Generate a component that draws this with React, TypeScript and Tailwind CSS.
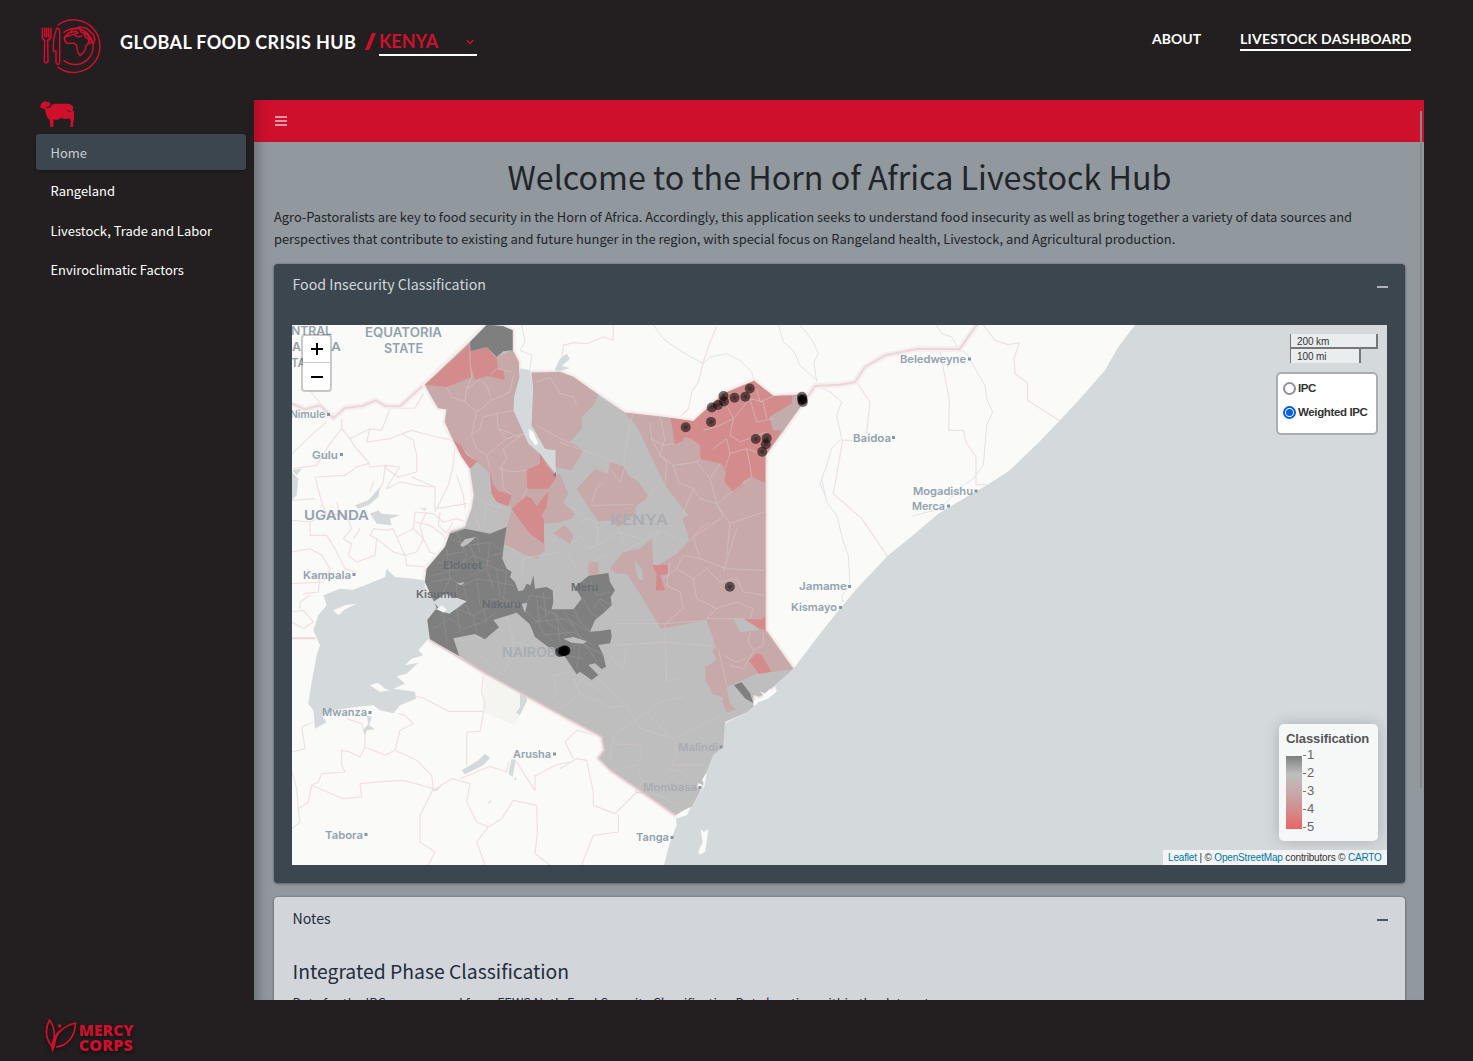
import React from "react";

const SANS = "font-['Noto_Sans_CJK_SC','Noto_Sans',sans-serif]";
const GEO = "font-['Lato','Open_Sans',sans-serif]";
const ARIAL = "font-['Liberation_Sans',Arial,sans-serif]";

function HubLogo() {
  return (
    <svg width="62" height="58" viewBox="0 0 186 174" fill="none" stroke="#cf102d" strokeWidth="4.500" strokeLinecap="round" strokeLinejoin="round">
      <path d="M54 24A79 79 0 1 1 54 151" />
      <path d="M72 46A54 54 0 1 1 72 131" />
      <path d="M7 34v26q0 8 7 10l-1 64q5 8 11 0l-1-64q9-2 10-12V34M14 34v26M20 34v26M26 34v26" />
      <path d="M50 34q8-2 9 8v93q-1 9-6 7t-5-8v-32H40q-2-36 10-68z" />
      <path d="M74 66q2-10 12-9l-4-7 10-4 2-6 12-5 14-5 20 4 13 12 8 8 4 15-6 12-5-13-8-8-6-9-9-1 7 12 10 6-4 12-6 6-2 12-9 12-7 6-6-9-3-12-1-10-7-6H87q-10 0-13-10-3-8 5-15z" />
      <path d="M86 57l14-5 12 7 13-1M94 46l15-3 5 5-9 2M120 37l4 9 13 3M148 80l7-6" />
    </svg>
  );
}

function Sheep() {
  return (
    <svg width="34" height="28" viewBox="0 0 108 87" fill="#cf102d">
      <path d="M1 22Q2 9 10 5q8-5 14 1 8-3 9 5-1 10-10 10-7 0-8-6 2 11 13 9 8-2 9-10 5-2 12-3h36q8-1 14 4 9 4 6 12-2 4-1 6 5 4 7 4 1 8-2 20l-3 12-1 16h-9l2-18-4-10q-12 4-20 1-4-2-9-1-8 8-22 3l-1 25h-9l-2-22q-10-7-13-24L14 26Q6 28 1 22z" />
      <path d="M86 30q2 7 12 6" fill="none" stroke="#231f20" strokeWidth="2.500" />
    </svg>
  );
}

function MercyLogo() {
  return (
    <svg className="drop-shadow-[0_2px_2px_rgba(0,0,0,0.6)]" width="92" height="38" viewBox="0 0 92 38">
      <g fill="none" stroke="#cf102d" strokeWidth="1.700" strokeLinejoin="round">
        <path d="M7.500 30Q-3 18 4.500 3q6 8 4.500 19" />
        <path d="M11 30C22 29 30 20 30.500 6 20 8 14 14 9.500 22" />
      </g>
      <g fill="#cf102d">
        <path d="M6.500 27Q8 18 16 12q-4 6-5 12-1 7-3.500 11.500Q6 33 6.500 27z" />
        <circle cx="14.500" cy="9" r="1.800" />
      </g>
      <g fill="#cf102d" className="font-['Open_Sans',sans-serif] font-extrabold" fontSize="16">
        <text x="34" y="19" textLength="55" lengthAdjust="spacingAndGlyphs">MERCY</text>
        <text x="34" y="33.500" textLength="54" lengthAdjust="spacingAndGlyphs">CORPS</text>
      </g>
    </svg>
  );
}

const KENYA =
  "M590 9L540 60 405 188 425 225 445 258 470 262 465 300 490 355 540 440 552 520 545 560 525 615 480 630 465 675 410 740 405 780 430 835 465 815 530 838 470 875 440 858 412 894 420 954 508 1002 585 1054 840 1194 935 1244 942 1284 925 1309 960 1344 1155 1479 1205 1454 1235 1399 1250 1349 1270 1299 1300 1274 1305 1199 1370 1171 1390 1154 1390 1119 1410 1124 1450 1094 1510 1041 1427 924V400L1470 340 1545 235 1525 218 1450 222 1392 177 1300 215 1210 298 1120 285 1005 272 925 218 850 165 810 150 725 152 730 200 725 310 765 380 797 385V462L750 395 715 365 670 265 672 225 688 165 686 120 668 85V25L640 13 600 9z";

const PINK = [
  "M405 188L425 225 445 258 470 262 465 300 490 355 560 418 600 455 605 520 660 550 665 565 652 610 640 665 700 695 740 710 765 685 760 605 810 600 845 590 855 575 820 540 835 515 810 455 800 460 750 395 715 365 670 265 672 225 688 165 686 120 668 85 620 105 540 60z",
  "M725 152L810 150 850 165 925 218 910 250 875 285V320L840 360 880 385 845 445 797 435V385L765 380 725 310 730 200z",
  "M960 420L1005 435 1015 460 1045 480 1078 525 1040 550 1035 575 985 615 960 595 925 598 895 555 860 500 915 442 955 455z",
  "M790 632L825 610 850 640 840 665 815 650z",
  "M895 720L905 716 925 722V765L895 760z",
  "M1005 272L1120 285 1210 298 1300 215 1392 177 1450 222 1525 218 1545 235 1427 400V924L1510 1041 1440 1050 1400 1055 1310 1095 1320 1145 1338 1162 1310 1172 1297 1140 1300 1126 1265 1115 1260 1095 1247 1080 1245 1035 1272 1020 1280 1010 1267 990 1276 970 1250 895 1112 920 1052 819 1010 755 980 755 960 740 1000 690 1050 680 1085 650 1090 720 1085 742 1120 720 1160 695 1198 655 1178 590 1195 580 1125 490 1080 395 1045 320z",
];

const RED = [
  "M540 65L405 188 470 195 545 165z",
  "M542 90L590 75 620 110 625 142 640 145 645 173 590 162 555 173 542 130z",
  "M490 355L515 372 530 400 563 418 540 440 515 405z",
  "M750 395L770 430 800 465 775 500 712 500 710 445 750 425z",
  "M600 450L610 490 625 508 665 518 655 553 620 540 605 515z",
  "M665 560L710 522 725 530 740 553 760 525 775 510 770 555 755 580 762 595V665L720 635z",
  "M1210 298L1300 215 1392 177 1450 222 1507 222 1505 245 1438 285 1450 325 1475 325 1427 400 1425 482 1385 465 1358 478V490L1330 510 1303 480 1308 450 1295 425 1232 412 1230 370 1205 350 1185 345 1175 358 1155 367 1142 288z",
  "M1085 730L1132 728 1135 755 1110 760 1125 805 1098 805 1100 755z",
  "M1360 889L1427 886V924L1410 920z",
  "M1400 994L1415 1000 1445 1049 1407 1056 1377 1016z",
];

const DARK = [
  "M590 9L540 60 542 88 590 75 620 105 640 88 668 85V25L640 13 600 9z",
  "M525 620L600 635 650 615 642 665 637 710 650 740 665 750 660 765 675 780 685 808 700 805 710 785 722 790 730 760 735 800 770 795 788 805 790 840 785 862H850L875 830 855 795 895 762 955 753 960 780 975 805 962 825 965 850 940 874 915 894 900 929 930 927 962 922 965 944 960 964 925 969 940 999 948 1034 935 1041 915 1024 895 1029 925 1059 905 1074 870 1049 860 1057 825 1004 780 979 735 945 725 920 718 905 680 872 610 894 627 916 585 952 555 936 490 949 508 1002 420 954 412 894 440 858 430 835 405 780 410 740 465 675 480 635z",
  "M1332 1089L1355 1081 1380 1114 1390 1144 1365 1129z",
  "M788 460L798 450V464z",
];

const OCEAN =
  "M2535 9L2485 75 2445 145 2370 230 2310 295 2245 362 2195 410 2160 445 2090 490 2020 530 1945 575 1860 647 1795 700 1700 800 1640 872 1580 948 1510 1041 1455 1090 1460 1108 1435 1130 1400 1140 1390 1154 1370 1171 1305 1205 1300 1274 1270 1299 1250 1349 1245 1389 1205 1454 1190 1480 1158 1490 1160 1510 1140 1560 1122 1629H3291V9z";

const VICTORIA =
  "M100 820L150 800 190 803 225 790 285 765 290 740 315 765 370 770 403 775 405 800 430 835 520 830 525 845 470 876 440 860 412 894 420 945 385 985 400 1000 365 1010 345 1030 385 1022 350 1055 320 1063 345 1085 310 1100 375 1109 378 1130 330 1150 310 1174 270 1165 250 1150 200 1155 130 1165 95 1180 110 1200 75 1220 70 1165 55 1145 65 1080 80 1000 90 970 70 925 85 880 110 850z";

const TURKANA = "M700 140L720 145 732 200 725 310 765 380 797 385V462L750 395 715 365 670 265 672 225 688 165 690 140z";

const LAKES = [
  "M795 140L810 110 830 95 840 110 815 132 840 138 800 150z",
  "M6 450L25 470 20 520 6 535z",
  "M6 445L35 440 20 460z",
  "M240 575L265 565 275 575 330 580 300 590 305 610 260 605z",
  "M195 550L235 535 270 495 265 525 235 550 205 560z",
  "M385 555L400 560 410 558 405 566z",
  "M690 1115L705 1110 712 1135 690 1180 678 1172 690 1155z",
  "M515 1345L565 1315 585 1295 600 1308 580 1330 525 1357z",
  "M665 1310L678 1315 672 1340 668 1365 655 1355z",
  "M675 1365L680 1372 673 1376z",
  "M428 1408L455 1392 440 1406z",
  "M590 1445L605 1433 600 1442z",
  "M230 1180L245 1185 238 1210 255 1222 230 1225 225 1240 220 1225 235 1205z",
];

const ISLANDS = [
  "M1232 1522L1242 1530 1255 1520 1250 1560 1245 1590 1230 1598 1225 1590 1238 1560z",
  "M1390 1140L1405 1130 1430 1132 1405 1140 1395 1152z",
  "M1410 1108L1425 1115 1440 1100 1445 1110 1425 1125z",
  "M1158 1486L1172 1470 1200 1456 1190 1476z",
  "M1225 1383L1238 1390 1232 1405 1222 1395z",
  "M1250 1350L1243 1385 1236 1375z",
  "M130 865L165 850 200 845 165 862 145 880z",
  "M240 1090L265 1082 285 1100 300 1105 270 1110z",
  "M716 320L730 330 745 365 735 370 718 345z",
];

/* Thin administrative boundaries outside the classified area. */
const BORDERS = [
  "M180 350L240 320 275 325 300 260M300 260L375 258 400 215M180 350L195 375 235 420 240 435 285 430 330 435M240 320L230 360 300 350 335 335 365 325 440 345 480 352",
  "M155 290L155 320 120 365 80 430 10 440M155 320L180 350M6 395L80 325 110 300M335 335L370 355 380 400 380 450 325 465 290 440 285 430",
  "M365 465L435 495V570M480 352L495 370 490 430 475 490 440 560 530 545M500 460L520 520 525 560",
  "M80 465L165 460 200 435 235 425M75 465L95 540 110 575 170 580 185 620 160 650 185 665 175 700 200 720M6 535L75 530",
  "M110 575L60 600 6 595M60 600L60 640 110 640 135 680 165 740 200 750M6 690L60 680 95 700 120 740 100 780 6 785",
  "M200 720L255 700 260 650 240 640 250 620 290 625M290 625L310 620 320 645 370 620 375 570 430 575M320 645L345 700 350 730 410 735M260 650L310 690 345 700",
  "M430 575L460 600 500 590 530 600M375 600L420 610 460 640 470 670M370 620L400 650 420 690 440 700M345 700L380 690 400 650M285 430L280 480 270 500M330 435L300 480 290 500 330 480 380 490 435 495",
  "M60 750L90 770 85 810 40 815M6 870L40 865 70 900 40 920 6 900M30 860L30 840 60 820",
  "M210 620L190 650M250 480L240 510M140 540L150 580M490 600L470 630M450 570L445 610 475 640M410 570L390 610 400 650",
  "M375 1122L405 1130 475 1168H580M580 1055L575 1110 585 1145 570 1228 530 1230V1330",
  "M170 1190L215 1205 225 1235V1275L285 1300 315 1285 330 1225 370 1205 345 1180 325 1175M225 1275L210 1305 180 1290 155 1285V1330L165 1350 95 1355 85 1380 65 1390 100 1405 160 1430 215 1425 210 1385 285 1378 340 1375 430 1400 425 1360 380 1315 315 1285",
  "M430 1400L390 1480V1560L435 1590 415 1629M65 1390L55 1440 25 1460 30 1500 6 1520M6 1350L20 1400 25 1460M6 1290L45 1280 35 1215 70 1200M430 1405L485 1370 540 1385 530 1440 560 1500 595 1515 560 1560 585 1629",
  "M510 1370L600 1333 650 1350 655 1320M680 1320L705 1360 735 1405V1362L800 1328 840 1320M595 1515L635 1490 670 1435 740 1450 742 1535 735 1595 780 1629",
  "M810 1340L860 1310 890 1315 910 1410 910 1450 975 1475 1040 1410M850 1310L825 1260 860 1225 920 1240M985 1477V1530L910 1540 890 1590 875 1629",
  "M815 120L820 70 850 62 890 65 940 45 970 55V9M1280 15L1260 60 1240 120 1225 180 1205 210 1195 260 1170 285",
  "M1700 180L1740 240 1730 335M1690 355H1658L1630 515 1715 590 1793 704M1950 85L1978 235 1976 325H2020L2028 360 2058 405V488H2090M2080 9L2115 55 2155 68 2188 62 2172 110 2175 155 2213 183V235L2310 297",
];

const RIVERS = [
  "M1090 9L1120 50 1170 85 1195 100 1240 125 1260 105 1310 95 1350 115 1385 150 1392 175M1465 9L1480 60 1510 85 1530 130 1575 170M1530 9L1555 40 1570 60 1585 95 1572 120 1580 180",
  "M1580 190L1620 210 1655 240 1640 280 1655 350 1625 380 1610 430 1595 470 1610 540 1640 580 1655 640 1660 660 1675 700 1680 790 1655 820 1660 840M1600 460L1590 485 1605 520",
  "M1940 9L1955 35 1985 45 2005 80 2030 95 2055 140 2085 190 2090 230 2108 270 2090 310 2085 370 2080 430 2050 470 2020 490 1950 560 1865 583",
  "M695 9L705 60 690 85 725 100 720 145M760 200L752 240 765 290M60 205L95 250 110 290",
];

/* Sub-county outlines drawn faintly over the fills. */
const MESH = [
  "M540 60V120L545 165 530 200 525 240 560 270 605 235 590 190 570 172 530 200M470 195L485 225 525 240M605 235L660 210 670 160M560 270L545 340 560 380 590 400 600 440M670 265L620 275 625 320 650 350 700 335 640 380 650 410 630 440 665 450 710 445M620 275L580 285 570 320 545 340M625 320L690 345M590 400L650 350M635 440L640 500 665 518M712 500L695 530M600 160L620 140 665 150",
  "M740 180L780 165 810 215 850 225 860 250M740 310L810 350 845 365M810 360L970 418M925 218L1020 310 1000 430M1020 310L1030 270M1080 300L1085 350 1110 400 1130 420M1085 350L1120 370 1150 365M1110 285L1125 350 1110 400 1150 430 1220 420 1232 412M1130 420L1125 490M1150 430L1165 480 1210 500 1180 570 1195 580M1220 420L1260 470 1280 545 1385 465M1290 425L1260 470M1210 500L1230 530 1280 545 1320 605 1420 570M1280 545L1300 585 1210 645M1320 605L1310 700M1210 645L1230 710 1310 740 1420 745M1300 750L1340 620M1200 655L1230 620 1260 600",
  "M1240 325L1290 310 1330 290 1380 230M1330 290L1310 250 1260 260M1330 290L1320 340 1350 360 1430 330M1380 230L1400 300 1450 290M1270 380L1310 350 1320 395 1370 380 1425 400M1320 395L1305 440M1370 380L1380 430 1385 465M1400 200L1410 240 1450 222M1380 230L1420 240 1430 290",
  "M870 600L890 590 920 600 925 630 920 670 895 680 870 640 830 680M850 560L900 595M925 670L985 630 1050 650M985 615L1000 660M1000 690L1110 625 1160 650M1110 625L1090 660M950 700L880 730M905 540L920 500 940 480M900 550L1030 548M960 440L990 480 1005 435M835 700L870 750M1090 500L1070 530",
  "M1120 770L1160 740 1210 770 1250 740 1290 780 1340 770 1360 810 1425 820M1160 740L1180 700 1230 710M1210 770L1220 830 1280 860 1340 840M1130 900L1180 860 1170 810 1130 790M1280 860L1250 890 1420 890M1340 840L1390 860 1380 890M1140 720L1130 790",
  "M970 905H1125L1250 895M970 970L1130 960 1280 975M1125 905L1130 1080 1180 1065M1010 970L1000 1040 960 1000M1380 930L1375 960 1390 985 1420 970 1420 930M1320 1030L1360 1040 1390 990M1285 980L1310 1090M1300 1000L1340 1020 1370 1010M1180 1125L1110 1140 1040 1190 970 1240 960 1310M860 1090L900 1050 1010 1150 1050 1220 1150 1250 1290 1180M1070 1170L1145 1250M810 1160L870 1115 960 1155 1010 1150M850 1070L870 1115M830 1000L870 1070 940 1110M970 1265L1050 1270 1055 1300 1040 1330 1060 1380 1035 1410M1150 1250L1160 1290 1145 1330 1240 1330M960 1344L1040 1330M1130 1340L1180 1350 1200 1380M1035 1410L1110 1420 1160 1450",
  "M555 520L590 545 640 560M555 580L570 620M590 545L580 610M500 960L600 940M650 880L670 960 655 1020 640 1060M670 960L720 970M840 1050L790 1060 800 1110 780 1140M570 1000L640 1060M650 670L700 710 755 700 810 690M700 710L695 760M765 640L810 660",
];

/* Denser mesh for the urban sub-counties in the dark cluster. */
const DARKMESH = [
  "M480 650L540 670 600 660 640 690M500 630L530 700 510 740 430 760M540 670L560 720 620 740 650 750M600 660L590 740 610 800M440 720L500 735 550 700 600 720M420 780L480 770 520 790 560 770 620 780 670 790M470 680L480 770 460 810M520 790L530 830M560 770L570 850 610 830 680 850M620 740L630 830M450 880L500 860 550 880 610 850M430 920L480 890 520 920 580 900 620 870M460 880L470 960M500 860L510 930M550 880L560 930M650 750L640 830 700 860 720 820 780 830M700 860L740 900 780 870M560 640L570 690M520 690L460 700M590 740L540 760M500 780L500 820M640 690L610 700",
  "M740 820L750 920 790 960M760 810L770 900 830 940M790 870L820 920 870 960M820 865L850 910 890 980M850 860L870 900 900 925M880 830L900 870 930 890M900 770L920 820 960 810M910 860L930 830 965 850M730 900L830 890 900 930M760 940L850 930 910 970M840 980L870 960 940 1000M870 960L860 1040M890 970L920 1020M830 1000L880 1010M740 850L800 880 850 910M540 880L530 850 490 860M580 850L590 910M800 880L810 960M930 840L950 865",
];

type Label = [string, number, number, number, number];
const TOWNS: Label[] = [
  ["EQUATORIA", 365, 336.5, 77, 12.5],
  ["STATE", 384, 352.5, 39, 12.5],
  ["Nimule", 290, 418, 35, 11],
  ["Gulu", 312, 458.5, 26, 11],
  ["UGANDA", 304, 520, 65, 13],
  ["Kampala", 303, 578.5, 48, 11],
  ["Mwanza", 322, 716, 45, 11],
  ["Arusha", 513, 757.5, 38, 11],
  ["Tabora", 325, 838.5, 38, 11],
  ["Tanga", 636, 841, 33, 11],
  ["Beledweyne", 900, 362.5, 66, 11],
  ["Baidoa", 853, 441.5, 38, 11],
  ["Mogadishu", 913, 494.5, 60, 11],
  ["Merca", 912, 509.5, 33, 11],
  ["Jamame", 799, 590, 48, 11],
  ["Kismayo", 791, 611, 46, 11],
  ["NTRAL", 291, 335, 41, 12],
  ["A", 292, 350.5, 9, 12],
  ["A", 331, 350.5, 10, 12],
  ["TA", 291, 366.5, 15, 12],
];
const COVERED: Label[] = [
  ["KENYA", 610, 524.5, 58, 14],
  ["NAIROBI", 502, 657, 58, 13],
  ["Malindi", 678, 750.5, 40, 11],
  ["Mombasa", 643, 791, 54, 11],
];
const SHADED: Label[] = [
  ["Eldoret", 443, 568.5, 39, 11],
  ["Kisumu", 416, 598, 41, 11],
  ["Nakuru", 482, 607.5, 39, 11],
  ["Meru", 571, 590.5, 27, 11],
];
const MARKS = [
  [328.5, 414.5], [341.5, 454.5], [354, 574.5], [370, 712.5], [554.5, 754], [366, 834.5], [672, 837.5],
  [969.5, 359], [893.5, 437.5], [976, 491], [948.5, 506], [849.5, 586.5], [840.5, 607.5], [721, 747], [700, 787.5],
];
const POINTS = [
  [685.7, 427.3], [711, 421.9], [711.8, 407.5], [718, 405], [724, 401.5], [723.5, 396], [734.5, 397.7],
  [745.3, 396.7], [749.8, 388.5], [755.8, 439], [766.7, 438.3], [765.8, 444.3], [762.2, 451.7],
  [802, 396.8], [802.5, 399], [802.8, 402], [802.3, 400], [729.8, 586.7],
  [565, 651], [564, 651], [565.5, 650.5], [564, 650.5], [562.5, 651.5], [560, 652],
];

function TownText({ items, fill }: { items: Label[]; fill: string }) {
  return (
    <g fill={fill} className="font-['Inter',sans-serif] font-semibold">
      {items.map(([name, x, y, w, size], i) => (
        <text key={i} x={x} y={y} textLength={w} lengthAdjust="spacingAndGlyphs" fontSize={size}>
          {name}
        </text>
      ))}
    </g>
  );
}

const paths = (list: string[]) => list.map((d, i) => <path key={i} d={d} />);

function MapCanvas() {
  return (
    <svg className="block h-[540px] w-[1095px]" viewBox="292 325 1095 540">
      <rect x="292" y="325" width="1095" height="540" fill="#fafaf8" />
      <g transform="translate(290 322) scale(.333333)" strokeLinejoin="round">
        <path d="M585 1054L712 1125 675 1210 578 1170z" fill="#f4f5f0" />
        <g fill="none" stroke="#dee4e9" strokeWidth="3">{paths(RIVERS)}</g>
        <g fill="none" stroke="#f1dfe1" strokeWidth="3.500">{paths(BORDERS)}</g>
        <g fill="none" strokeLinecap="round">
          <path d="M6 245L45 262 90 250 130 288 165 258 215 252 258 235 285 252 330 253 405 185 590 9M1545 235L1575 192 1650 188 1695 180 1725 135 1785 100 1885 80 2008 82 2060 9" stroke="#f5f0ef" strokeWidth="18" />
          <path d="M6 245L45 262 90 250 130 288 165 258 215 252 258 235 285 252 330 253 405 185 590 9M1545 235L1575 192 1650 188 1695 180 1725 135 1785 100 1885 80 2008 82 2060 9M6 949H75" stroke="#edd5d8" strokeWidth="6" />
        </g>
        <path d={KENYA} fill="none" stroke="#f5efee" strokeWidth="17" />
        <path d={KENYA} fill="none" stroke="#eedcde" strokeWidth="5" />
        <path d={OCEAN} fill="#d4dadc" />
        <path d={VICTORIA} fill="#d4dadc" />
        <path d={TURKANA} fill="#d4dadc" />
        <g fill="#d4dadc">{paths(LAKES)}</g>
        <path d={KENYA} fill="#bebebe" />
        <g fill="#c7a9a9">{paths(PINK)}</g>
        <g fill="#d38b8b">{paths(RED)}</g>
        <path d="M1505 245L1520 225 1542 235 1475 325 1450 325 1438 285z" fill="#c2adad" />
        <path d="M1330 889L1360 891 1410 924 1350 931z" fill="#bebebe" />
        <path d="M1035 715L1055 740 1060 775 1045 770 1035 735z" fill="#bebebe" />
        <g fill="none" stroke="#d0c5c4" strokeOpacity=".65" strokeWidth="3">{paths(MESH)}</g>
        <g fill="#7f7f7f">{paths(DARK)}</g>
        <g fill="none" stroke="#aaa39f" strokeOpacity=".4" strokeWidth="2.500">{paths(DARKMESH)}</g>
        <path d="M510 670L525 652 558 645 535 665 518 675zM500 785L525 780 515 790zM695 845L712 843 705 872z" fill="#bebebe" />
        <path d="M820 950L850 945 890 958 880 965 845 962z" fill="#bebebe" />
        <path d="M430 840L465 815 530 838 478 875 455 868z" fill="#d4dadc" />
        <path d="M430 868L455 850 470 862 462 872 440 862z" fill="#f5f5f3" />
        <g fill="#fafaf8">{paths(ISLANDS)}</g>
        <path d="M420 954L585 1054 840 1194 935 1244 942 1284 925 1309 960 1344 1155 1479" fill="none" stroke="#e6c9cc" strokeWidth="5" />
        <path d="M1427 400V924L1510 1041" fill="none" stroke="#e0b9bd" strokeWidth="3" />
      </g>
      <TownText items={TOWNS} fill="#92a2b0" />
      <TownText items={COVERED} fill="#a9adb1" />
      <TownText items={SHADED} fill="#666c72" />
      {MARKS.map(([x, y], i) => (
        <rect key={i} x={x - 1.5} y={y - 1.5} width="3" height="3" fill="#8496a6" />
      ))}
      {POINTS.map(([x, y], i) => (
        <g key={i}>
          <circle cx={x} cy={y} r="5" fill="#000" fillOpacity=".55" />
          <circle cx={x} cy={y} r="2" fill="#000" fillOpacity=".25" />
        </g>
      ))}
    </svg>
  );
}

function ZoomControl() {
  return (
    <div className="absolute top-[9px] left-[9px] h-[58px] w-[31px] rounded border-2 border-black/20 bg-white bg-clip-padding">
      <div className="flex h-[27px] items-center justify-center border-b border-[#ccc]">
        <svg width="12" height="12" viewBox="0 0 12 12" stroke="#000" strokeWidth="2"><path d="M0 6h12M6 0v12" /></svg>
      </div>
      <div className="flex h-[27px] items-center justify-center">
        <svg width="12" height="12" viewBox="0 0 12 12" stroke="#000" strokeWidth="2"><path d="M0 6h12" /></svg>
      </div>
    </div>
  );
}

function ScaleBar() {
  return (
    <div className={`${ARIAL} absolute top-[9px] right-[9px] w-[88px] text-[10px] leading-none tracking-[-0.1px] text-[#333]`}>
      <div className="flex h-[15px] w-[88px] items-center border-2 border-t-0 border-l border-[#777] bg-white/50 pt-[2px] pl-[6px]">200 km</div>
      <div className="flex h-[14px] w-[71px] items-center border-r-2 border-l border-[#777] bg-white/50 pt-[2px] pl-[6px]">100 mi</div>
    </div>
  );
}

function LayerControl() {
  return (
    <div className={`${ARIAL} absolute top-[47px] right-[9px] flex h-[63px] w-[102px] flex-col rounded-[5px] border-2 border-black/20 bg-white bg-clip-padding pt-[6px] pl-[5px] text-[11.500px] font-bold text-[#333]`}>
      <label className="flex h-[16px] items-center gap-[2px]">
        <span className="size-[13px] rounded-full border-2 border-[#8f8f9d] bg-white" />
        <span className="pt-px tracking-[-0.4px]">IPC</span>
      </label>
      <label className="mt-2 flex h-[16px] items-center gap-[2px] whitespace-nowrap">
        <span className="flex size-[13px] items-center justify-center rounded-full border-2 border-[#0060df] bg-white">
          <span className="size-[7px] rounded-full bg-[#0060df]" />
        </span>
        <span className="pt-px tracking-[-0.37px]">Weighted IPC</span>
      </label>
    </div>
  );
}

function Legend() {
  return (
    <div className={`${ARIAL} absolute right-[9px] bottom-[24px] h-[117px] w-[99px] rounded-[5px] bg-[#f6f8f7] pt-[6px] pl-[7px] shadow-[0_0_15px_rgba(0,0,0,0.2)]`}>
      <div className="text-[13px] leading-[18px] font-bold tracking-[-0.1px] text-[#555]">Classification</div>
      <div className="flex">
        <div className="mt-[8px] h-[73px] w-4 bg-[linear-gradient(#7f7f7f,#bebebe_25%,#c7a9a9_50%,#d38b8b_75%,#e86565)]" />
        <div className="-mt-[2px] ml-px text-[13px] leading-[18px] text-[#666]">
          {[1, 2, 3, 4, 5].map((n) => (
            <div key={n} className="flex items-center">
              <span className="mr-px h-px w-[3px] bg-[#777]" />
              <span>{n}</span>
            </div>
          ))}
        </div>
      </div>
    </div>
  );
}

function Attribution() {
  return (
    <div className={`${ARIAL} absolute right-0 bottom-0 h-[15px] w-[224px] bg-white/70 pl-[5px] text-[10px] leading-[15px] tracking-[-0.17px] whitespace-nowrap text-[#333]`}>
      <span className="text-[#0078a8]">Leaflet</span> | © <span className="text-[#0078a8]">OpenStreetMap</span> contributors ©{" "}
      <span className="text-[#0078a8]">CARTO</span>
    </div>
  );
}

const NAV = ["Rangeland", "Livestock, Trade and Labor", "Enviroclimatic Factors"];

export default function App() {
  return (
    <div className={`${SANS} flex h-[1061px] w-[1473px] flex-col overflow-hidden bg-[#231f20]`}>
      <header className={`${GEO} flex h-[100px] shrink-0 items-start font-bold text-white`}>
        <div className="mt-[17px] ml-[40px]"><HubLogo /></div>
        <div className="mt-[29px] ml-[18px] w-[237px] text-[18px] leading-[26px] whitespace-nowrap tracking-[0.35px]">GLOBAL FOOD CRISIS HUB</div>
        <svg className="mt-[33px] ml-[8px]" width="12" height="18" viewBox="0 0 12 18"><path d="M0 17L7 0h4L4 17z" fill="#cf102d" /></svg>
        <div className="mt-[28px] ml-[2px] flex h-[28px] w-[98px] items-start justify-between border-b-2 border-white text-[18px] leading-[26px] text-[#cf102d]">
          <span>KENYA</span>
          <svg className="mt-[10px] mr-[3px]" width="8" height="8" viewBox="0 0 8 8" fill="none" stroke="#cf102d" strokeWidth="1.300"><path d="M.7 2L4 5.500 7.300 2" /></svg>
        </div>
        <nav className="ml-auto flex gap-[40px] pt-[29px] pr-[62px] text-[14px] leading-[20px] whitespace-nowrap">
          <span className="w-[49px] pl-px">ABOUT</span>
          <span className="h-[22px] w-[171px] border-b-2 border-white tracking-[0.26px]">LIVESTOCK DASHBOARD</span>
        </nav>
      </header>

      <div className="flex h-[900px] shrink-0">
        <aside className="w-[254px] shrink-0 pl-[36px] text-[12.940px]">
          <div className="ml-1 h-[34px]"><Sheep /></div>
          <div className="h-[36px] w-[210px] rounded-[3px] bg-[#3b464e] pl-[14.500px] leading-[38px] text-[#c9ced3] shadow-[0_1px_3px_rgba(0,0,0,0.4)]">Home</div>
          <div className="mt-[2px] flex flex-col pl-[14.500px] text-white">
            {NAV.map((n) => (
              <div key={n} className="h-[39.500px] leading-[38px]">{n}</div>
            ))}
          </div>
        </aside>

        <main className="relative w-[1170px] shrink-0 overflow-hidden bg-[#91989e] shadow-[inset_14px_0_14px_-12px_rgba(0,0,0,0.35)]">
          <div className="flex h-[42px] items-center bg-[#cf102d] pl-[21px] shadow-[inset_14px_0_14px_-10px_rgba(0,0,0,0.2)]">
            <div className="flex flex-col gap-[2px]">
              <span className="h-[2px] w-3 bg-[#e095a3]" />
              <span className="h-[2px] w-3 bg-[#e095a3]" />
              <span className="h-[2px] w-3 bg-[#e095a3]" />
            </div>
          </div>
          <div className="px-[20px]">
            <h1 className="mt-[10px] w-[1131px] text-center text-[32.250px] leading-[48px] whitespace-nowrap text-[#212529]">Welcome to the Horn of Africa Livestock Hub</h1>
            <p className="mt-[6px] text-[12.890px] leading-[22px] whitespace-nowrap text-[#212529]">
              Agro-Pastoralists are key to food security in the Horn of Africa. Accordingly, this application seeks to understand food insecurity as well as bring together a variety of data sources and
              <br />
              perspectives that contribute to existing and future hunger in the region, with special focus on Rangeland health, Livestock, and Agricultural production.
            </p>

            <section className="mt-[14px] h-[619px] w-[1131px] rounded-[4px] bg-[#3b464e] shadow-[0_0_2px_rgba(0,0,0,0.3),0_1px_3px_rgba(0,0,0,0.3)]">
              <div className="flex h-[61px] justify-between pr-[17px] pl-[18.500px]">
                <h2 className="pt-[8px] text-[14.200px] leading-[25px] text-[#d3d7db]">Food Insecurity Classification</h2>
                <span className="mt-[22px] h-[2px] w-[11px] bg-[#aeb3b9]" />
              </div>
              <div className="relative ml-[18px] h-[540px] w-[1095px] overflow-hidden">
                <MapCanvas />
                <ZoomControl />
                <ScaleBar />
                <LayerControl />
                <Legend />
                <Attribution />
              </div>
            </section>

            <section className="mt-[14px] h-[400px] w-[1131px] rounded-[4px] bg-[#d2d6db] text-[#1f2d3d] shadow-[0_0_2px_rgba(0,0,0,0.3),0_1px_3px_rgba(0,0,0,0.3)]">
              <div className="flex h-[61px] justify-between pr-[17px] pl-[18.500px]">
                <h2 className="pt-[9px] text-[14.200px] leading-[25px]">Notes</h2>
                <span className="mt-[22px] h-[2px] w-[11px] bg-[#4a5563]" />
              </div>
              <div className="pl-[18.500px]">
                <h3 className="text-[19.350px] leading-[27px]">Integrated Phase Classification</h3>
                <p className="mt-[7px] text-[12.890px] leading-[22px]">Data for the IPC was sourced from FEWS Net's Food Security Classification Data location within the data set.</p>
              </div>
            </section>
          </div>
          <div className="absolute top-[11px] right-[2px] h-[677px] w-[2px] bg-[#85878a]" />
        </main>
      </div>

      <footer className="pt-[17px] pl-[45px]"><MercyLogo /></footer>
    </div>
  );
}
